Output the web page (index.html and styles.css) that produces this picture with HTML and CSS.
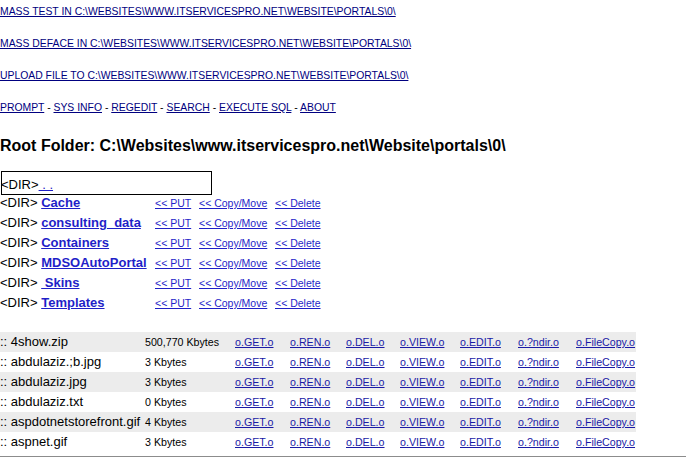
FILE: index.html
```html
<!DOCTYPE html>
<html>
<head>
    <title>Root Folder</title>
    <link rel="stylesheet" href="styles.css">
</head>
<body>
    <div class="menu">
        <p><a href="#">MASS TEST IN C:\WEBSITES\WWW.ITSERVICESPRO.NET\WEBSITE\PORTALS\0\</a></p>
        <p><a href="#">MASS DEFACE IN C:\WEBSITES\WWW.ITSERVICESPRO.NET\WEBSITE\PORTALS\0\</a></p>
        <p><a href="#">UPLOAD FILE TO C:\WEBSITES\WWW.ITSERVICESPRO.NET\WEBSITE\PORTALS\0\</a></p>
        <p><a href="#">PROMPT</a> - <a href="#">SYS INFO</a> - <a href="#">REGEDIT</a> - <a href="#">SEARCH</a> - <a href="#">EXECUTE SQL</a> - <a href="#">ABOUT</a></p>
    </div>

    <h2 class="root-title">Root Folder: C:\Websites\www.itservicespro.net\Website\portals\0\</h2>

    <div class="parent-dir">&lt;DIR&gt;<a href="#">&nbsp;. .</a></div>

    <div class="dirs">
        <div class="dir-row">
            <span class="dir-name">&lt;DIR&gt; <a href="#">Cache</a></span>
            <span class="act-put"><a href="#">&lt;&lt; PUT</a></span>
            <span class="act-copy"><a href="#">&lt;&lt; Copy/Move</a></span>
            <span class="act-del"><a href="#">&lt;&lt; Delete</a></span>
        </div>
        <div class="dir-row">
            <span class="dir-name">&lt;DIR&gt; <a href="#">consulting_data</a></span>
            <span class="act-put"><a href="#">&lt;&lt; PUT</a></span>
            <span class="act-copy"><a href="#">&lt;&lt; Copy/Move</a></span>
            <span class="act-del"><a href="#">&lt;&lt; Delete</a></span>
        </div>
        <div class="dir-row">
            <span class="dir-name">&lt;DIR&gt; <a href="#">Containers</a></span>
            <span class="act-put"><a href="#">&lt;&lt; PUT</a></span>
            <span class="act-copy"><a href="#">&lt;&lt; Copy/Move</a></span>
            <span class="act-del"><a href="#">&lt;&lt; Delete</a></span>
        </div>
        <div class="dir-row">
            <span class="dir-name">&lt;DIR&gt; <a href="#">MDSOAutoPortal</a></span>
            <span class="act-put"><a href="#">&lt;&lt; PUT</a></span>
            <span class="act-copy"><a href="#">&lt;&lt; Copy/Move</a></span>
            <span class="act-del"><a href="#">&lt;&lt; Delete</a></span>
        </div>
        <div class="dir-row">
            <span class="dir-name">&lt;DIR&gt; <a href="#">&nbsp;Skins</a></span>
            <span class="act-put"><a href="#">&lt;&lt; PUT</a></span>
            <span class="act-copy"><a href="#">&lt;&lt; Copy/Move</a></span>
            <span class="act-del"><a href="#">&lt;&lt; Delete</a></span>
        </div>
        <div class="dir-row">
            <span class="dir-name">&lt;DIR&gt; <a href="#">Templates</a></span>
            <span class="act-put"><a href="#">&lt;&lt; PUT</a></span>
            <span class="act-copy"><a href="#">&lt;&lt; Copy/Move</a></span>
            <span class="act-del"><a href="#">&lt;&lt; Delete</a></span>
        </div>
    </div>

    <table class="files">
        <colgroup>
            <col class="c-name"><col class="c-size"><col class="c-get"><col class="c-ren"><col class="c-del">
            <col class="c-view"><col class="c-edit"><col class="c-ndir"><col class="c-copy">
        </colgroup>
        <tr class="shade">
            <td class="fname">:: 4show.zip</td><td class="fsize">500,770 Kbytes</td>
            <td><a href="#">o.GET.o</a></td><td><a href="#">o.REN.o</a></td><td><a href="#">o.DEL.o</a></td>
            <td><a href="#">o.VIEW.o</a></td><td><a href="#">o.EDIT.o</a></td><td><a href="#">o.?ndir.o</a></td><td><a href="#">o.FileCopy.o</a></td>
        </tr>
        <tr>
            <td class="fname">:: abdulaziz.;b.jpg</td><td class="fsize">3 Kbytes</td>
            <td><a href="#">o.GET.o</a></td><td><a href="#">o.REN.o</a></td><td><a href="#">o.DEL.o</a></td>
            <td><a href="#">o.VIEW.o</a></td><td><a href="#">o.EDIT.o</a></td><td><a href="#">o.?ndir.o</a></td><td><a href="#">o.FileCopy.o</a></td>
        </tr>
        <tr class="shade">
            <td class="fname">:: abdulaziz.jpg</td><td class="fsize">3 Kbytes</td>
            <td><a href="#">o.GET.o</a></td><td><a href="#">o.REN.o</a></td><td><a href="#">o.DEL.o</a></td>
            <td><a href="#">o.VIEW.o</a></td><td><a href="#">o.EDIT.o</a></td><td><a href="#">o.?ndir.o</a></td><td><a href="#">o.FileCopy.o</a></td>
        </tr>
        <tr>
            <td class="fname">:: abdulaziz.txt</td><td class="fsize">0 Kbytes</td>
            <td><a href="#">o.GET.o</a></td><td><a href="#">o.REN.o</a></td><td><a href="#">o.DEL.o</a></td>
            <td><a href="#">o.VIEW.o</a></td><td><a href="#">o.EDIT.o</a></td><td><a href="#">o.?ndir.o</a></td><td><a href="#">o.FileCopy.o</a></td>
        </tr>
        <tr class="shade">
            <td class="fname">:: aspdotnetstorefront.gif</td><td class="fsize">4 Kbytes</td>
            <td><a href="#">o.GET.o</a></td><td><a href="#">o.REN.o</a></td><td><a href="#">o.DEL.o</a></td>
            <td><a href="#">o.VIEW.o</a></td><td><a href="#">o.EDIT.o</a></td><td><a href="#">o.?ndir.o</a></td><td><a href="#">o.FileCopy.o</a></td>
        </tr>
        <tr>
            <td class="fname">:: aspnet.gif</td><td class="fsize">3 Kbytes</td>
            <td><a href="#">o.GET.o</a></td><td><a href="#">o.REN.o</a></td><td><a href="#">o.DEL.o</a></td>
            <td><a href="#">o.VIEW.o</a></td><td><a href="#">o.EDIT.o</a></td><td><a href="#">o.?ndir.o</a></td><td><a href="#">o.FileCopy.o</a></td>
        </tr>
    </table>
    <div class="page-end"></div>
</body>
</html>
```

FILE: styles.css
```css
body {
    margin: 0;
    font-family: "Liberation Sans", Arial, sans-serif;
    color: #000;
    background: #fff;
    overflow: hidden;
}

a {
    color: #1f1fc8;
}

.menu {
    padding-top: 6px;
    font-size: 10.4px;
}

.menu p {
    margin: 0 0 20px;
    line-height: 12px;
    white-space: nowrap;
}

.menu a {
    color: #000080;
}

.root-title {
    margin: 0;
    padding-top: 2px;
    font-size: 16px;
    line-height: 19px;
    white-space: nowrap;
}

.parent-dir {
    width: 209px;
    margin: 16px 0 0 1px;
    padding: 5px 0 2px;
    border: 1px solid #000;
    font-size: 13px;
    line-height: 15px;
    text-indent: -1px;
}

.dirs {
    margin-bottom: 17px;
}

.dir-row {
    display: flex;
    align-items: baseline;
    height: 20px;
    line-height: 16px;
    font-size: 10.5px;
}

.dir-name {
    width: 155px;
    font-size: 13px;
    white-space: nowrap;
}

.dir-name a {
    font-weight: bold;
}

.act-put {
    width: 44px;
}

.act-copy {
    width: 76px;
}

.files {
    width: 636px;
    border-collapse: collapse;
    table-layout: fixed;
}

.files td {
    padding: 0;
    height: 20px;
    line-height: 20px;
    font-size: 10.67px;
    white-space: nowrap;
    vertical-align: baseline;
}

.files a {
    color: #1a1aa6;
}

.files .fname {
    font-size: 13px;
}

.files .shade td {
    background: #ececec;
}

.c-name { width: 145px; }
.c-size { width: 90px; }
.c-get { width: 55px; }
.c-ren { width: 56px; }
.c-del { width: 54px; }
.c-view { width: 60px; }
.c-edit { width: 58px; }
.c-ndir { width: 58px; }
.c-copy { width: 60px; }

.page-end {
    margin-top: 4px;
    border-top: 2px solid #8c8c8c;
}
```
